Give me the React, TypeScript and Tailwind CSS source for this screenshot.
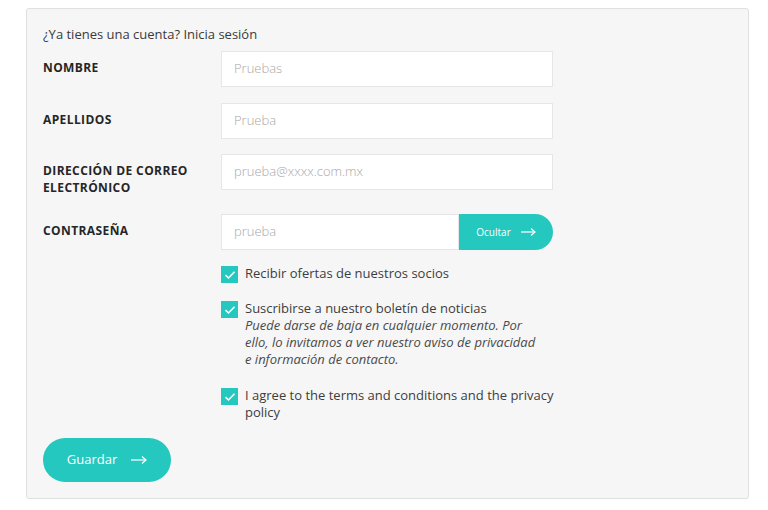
import React from "react";

const font = { fontFamily: "'Open Sans', 'Noto Sans', sans-serif" };

function Arrow({ w = 16, className = "" }: { w?: number; className?: string }) {
  return (
    <svg width={w} height="10" viewBox={`0 0 ${w} 10`} className={className} fill="none">
      <path d={`M0 5H${w - 1}`} stroke="currentColor" strokeWidth="1.2" />
      <path d={`M${w - 5} 1.5L${w - 1} 5L${w - 5} 8.5`} stroke="currentColor" strokeWidth="1.2" />
    </svg>
  );
}

function Check() {
  return (
    <span className="flex h-[17px] w-[17px] shrink-0 items-center justify-center bg-[#24c8bf]">
      <svg width="12" height="10" viewBox="0 0 12 10" fill="none">
        <path d="M1.5 5.2L4.5 8L10.5 1.8" stroke="white" strokeWidth="1.6" />
      </svg>
    </span>
  );
}

function Row({ label, children, cls = "mb-4" }: { label: React.ReactNode; children: React.ReactNode; cls?: string }) {
  return (
    <div className={`flex ${cls}`}>
      <div className="w-[178px] shrink-0 pt-[8px] pb-[2px] pr-4 text-[12px] font-bold uppercase leading-[17px] tracking-[0.4px] text-[#262626]">
        {label}
      </div>
      <div className="w-[332px]">{children}</div>
    </div>
  );
}

function Field({ ph }: { ph: string }) {
  return (
    <div className="flex h-[36px] items-center border border-[#e6e6e6] bg-white px-3 text-[13px] font-light text-[#a8a8a8]">
      {ph}
    </div>
  );
}

export default function App() {
  return (
    <div className="min-h-[510px] bg-white pt-[8px] pl-[26px]" style={font}>
      <div className="h-[491px] w-[723px] rounded-[3px] border border-[#e0e0e0] bg-[#f6f6f6] pl-[16px] pt-[17px]">
        <p className="mb-[8px] text-[13px] leading-[17px] text-[#3a3a3a]">¿Ya tienes una cuenta? Inicia sesión</p>
        <Row label="Nombre">
          <Field ph="Pruebas" />
        </Row>
        <Row label="Apellidos" cls="mb-[15px]">
          <Field ph="Prueba" />
        </Row>
        <Row label={<>Dirección de correo electrónico</>}>
          <Field ph="prueba@xxxx.com.mx" />
        </Row>
        <Row label="Contraseña">
          <div className="flex h-[36px]">
            <div className="flex flex-1 items-center border border-[#e6e6e6] bg-white px-3 text-[13px] font-light text-[#a8a8a8]">
              prueba
            </div>
            <div className="flex w-[94px] items-center justify-center gap-[10px] rounded-r-full bg-[#24c8bf] text-[10px] text-white">
              Ocultar
              <Arrow w={15} />
            </div>
          </div>
        </Row>
        <div className="ml-[178px] flex w-[340px] flex-col text-[13px] leading-[17px] text-[#3d3d3d]">
          <div className="flex gap-[7px]">
            <Check />
            <span className="-mt-[1px]">Recibir ofertas de nuestros socios</span>
          </div>
          <div className="mt-[18px] flex gap-[7px]">
            <Check />
            <div className="-mt-[1px] whitespace-nowrap">
              <div>Suscribirse a nuestro boletín de noticias</div>
              <div className="italic text-[#4a4a4a]">
                Puede darse de baja en cualquier momento. Por
                <br />
                ello, lo invitamos a ver nuestro aviso de privacidad
                <br />
                e información de contacto.
              </div>
            </div>
          </div>
          <div className="mt-[20px] flex gap-[7px]">
            <Check />
            <span className="-mt-[1px] whitespace-nowrap">
              I agree to the terms and conditions and the privacy
              <br />
              policy
            </span>
          </div>
        </div>
        <button className="mt-[17px] flex h-[44px] w-[128px] items-center justify-center gap-[14px] rounded-full bg-[#24c8bf] text-[13px] text-white">
          Guardar
          <Arrow w={16} />
        </button>
      </div>
    </div>
  );
}
